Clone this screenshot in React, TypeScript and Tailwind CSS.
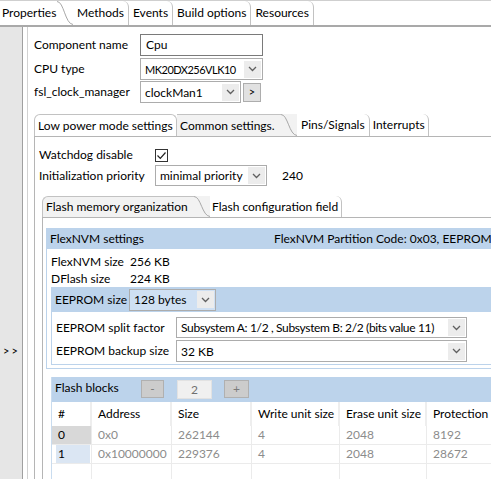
import React from 'react';

const Chevron = () => (
  <svg width="9" height="6" viewBox="0 0 9 6">
    <path d="M1 1l3.5 3.5L8 1" stroke="#606060" fill="none" strokeWidth="1.3" />
  </svg>
);

type ComboProps = {
  value: string;
  className: string;
  bg?: string;
  textCls?: string;
};

const Combo = ({ value, className, bg = 'bg-white', textCls = '' }: ComboProps) => (
  <div className={`flex items-center border border-[#acacac] ${bg} ${className}`}>
    <span className={`min-w-0 flex-1 overflow-hidden pl-[4px] leading-[17px] ${textCls}`}>{value}</span>
    <div className="mr-[1px] flex h-[17px] w-[17px] shrink-0 items-center justify-center bg-[#ececec]">
      <Chevron />
    </div>
  </div>
);

const Curve = ({ h }: { h: number }) => (
  <svg width="16" height={h} viewBox={`0 0 16 ${h}`} className="shrink-0">
    <path d={`M0 0.5 C7 0.5, 8 ${h - 1}, 16 ${h - 0.5}`} stroke="#a8a8a8" fill="none" />
  </svg>
);

const TopTabs = () => {
  const tabs = ['Methods', 'Events', 'Build options', 'Resources'];
  return (
    <div className="flex h-[27px] border-t border-[#cfcfcf] border-b-2 border-b-[#a9a9a9] bg-white">
      <div className="flex w-[57px] items-center pl-[2px]">Properties</div>
      <Curve h={24} />
      {tabs.map((t) => (
        <div
          key={t}
          className="flex items-center rounded-tr-[6px] border-r border-[#c2c2c2] px-[4px]"
        >
          {t}
        </div>
      ))}
    </div>
  );
};

const InnerTabs = () => (
  <div className="flex h-[23px] border-b border-[#b5b5b5]">
    <div className="flex w-[143px] items-center rounded-tl-[6px] rounded-tr-[6px] border-l border-r border-t border-[#c2c2c2] px-[3px]">
      Low power mode settings
    </div>
    <div className="flex w-[104px] items-center border-t border-[#c2c2c2] bg-[#f2f2f2] pl-[3px]">
      Common settings.
    </div>
    <div className="flex bg-[#f2f2f2]">
      <Curve h={22} />
    </div>
    <div className="flex items-center rounded-tr-[6px] border-r border-[#c2c2c2] px-[4px]">
      Pins/Signals
    </div>
    <div className="flex items-center rounded-tr-[6px] border-r border-[#c2c2c2] px-[3px]">
      Interrupts
    </div>
  </div>
);

const FlashTabs = () => (
  <div className="flex h-[22px] border-b border-[#b5b5b5]">
    <div className="flex w-[152px] items-center rounded-tl-[6px] border-l border-t border-[#c2c2c2] bg-[#f2f2f2] pl-[3px]">
      Flash memory organization
    </div>
    <div className="flex bg-[#f2f2f2]">
      <Curve h={21} />
    </div>
    <div className="flex items-center rounded-tr-[6px] border-r border-[#c2c2c2] pl-[2px] pr-[3px]">
      Flash configuration field
    </div>
  </div>
);

const columns = [
  { label: '#', w: 'w-[40px]' },
  { label: 'Address', w: 'w-[80px]' },
  { label: 'Size', w: 'w-[80px]' },
  { label: 'Write unit size', w: 'w-[88px]' },
  { label: 'Erase unit size', w: 'w-[87px]' },
  { label: 'Protection', w: 'w-[100px]' },
];

const rows = [
  ['0', '0x0', '262144', '4', '2048', '8192'],
  ['1', '0x10000000', '229376', '4', '2048', '28672'],
  ['', '', '', '', '', ''],
];

const FlashBlocks = () => (
  <div className="ml-[5px] mt-[8px] w-[520px] border-l border-[#c9dcef]">
    <div className="flex h-[25px] items-start bg-[#bcd3eb]">
      <span className="w-[89px] pl-[3px] pt-[3px] leading-[16px]">Flash blocks</span>
      <div className="mt-[3px] flex h-[18px] w-[23px] items-center justify-center border border-[#b0b0b0] bg-[#cccccc] text-[#7a7a7a]">
        -
      </div>
      <div className="ml-[13px] mt-[3px] flex h-[19px] w-[35px] items-center justify-center border border-[#e2e2e2] bg-[#f0f0f0] text-[#707070]">
        2
      </div>
      <div className="ml-[12px] mt-[3px] flex h-[18px] w-[25px] items-center justify-center border border-[#b0b0b0] bg-[#cccccc] text-[#7a7a7a]">
        +
      </div>
    </div>
    <div className="flex h-[24px]">
      {columns.map((c) => (
        <div key={c.label} className={`${c.w} flex items-center border-r-2 border-[#eeeeee] pl-[6px]`}>
          {c.label}
        </div>
      ))}
    </div>
    {rows.map((r, i) => (
      <div key={i} className="flex h-[19px] border-b border-[#ebebeb]">
        {r.map((v, j) => (
          <div
            key={j}
            className={`${columns[j].w} flex items-center border-r border-[#ebebeb] ${
              j === 0 ? 'text-black' : 'pl-[6px] text-[#8c8c8c]'
            }`}
          >
            {j === 0 && i === 0 && (
              <div className="flex h-full w-full items-center bg-[#d8d8d8] pl-[6px]">{v}</div>
            )}
            {j === 0 && i === 1 && (
              <div className="ml-[4px] mr-[1px] flex h-full flex-1 items-center bg-[#dbe6f3] pl-[2px]">
                {v}
              </div>
            )}
            {j > 0 && v}
          </div>
        ))}
      </div>
    ))}
  </div>
);

const FlexNvm = () => (
  <div className="w-[520px] border border-[#bcd3eb]">
    <div className="flex h-[20px] items-center bg-[#bcd3eb]">
      <span className="w-[227px] pl-[3px]">FlexNVM settings</span>
      <span>FlexNVM Partition Code: 0x03, EEPROM Data size</span>
    </div>
    <div className="pl-[4px] pt-[4px]">
      <div className="flex h-[17px] items-center">
        <span className="w-[79px]">FlexNVM size</span>
        <span>256 KB</span>
      </div>
      <div className="flex h-[17px] items-center">
        <span className="w-[79px]">DFlash size</span>
        <span>224 KB</span>
      </div>
      <div className="flex h-[25px] items-center bg-[#bcd3eb] pl-[4px]">
        <span className="w-[74px]">EEPROM size</span>
        <Combo value="128 bytes" className="h-[22px] w-[87px]" bg="bg-[#cfe0f3]" />
      </div>
      <div className="border border-t-0 border-[#bcd3eb] pb-[2px] pl-[4px] pt-[5px]">
        <div className="flex h-[21px] items-center">
          <span className="w-[120px]">EEPROM split factor</span>
          <Combo
            value="Subsystem A: 1/2 , Subsystem B: 2/2 (bits value 11)"
            className="h-[21px] w-[291px]"
            textCls="tracking-[-0.35px]"
          />
        </div>
        <div className="mt-[2px] flex h-[22px] items-center">
          <span className="w-[120px]">EEPROM backup size</span>
          <Combo value="32 KB" className="h-[22px] w-[291px]" />
        </div>
      </div>
      <div className="h-[3px]" />
    </div>
  </div>
);

export default function App() {
  return (
    <div className="h-[479px] w-[491px] overflow-hidden whitespace-nowrap bg-white font-['Lato','Segoe_UI',sans-serif] text-[12px] text-black">
      <TopTabs />
      <div className="flex h-[452px]">
        <div className="w-[23px] shrink-0 border-r border-[#a0a0a0] bg-[#e6e6e6] pl-[3px] pt-[316px] text-[11px] tracking-[2px]">
          &gt;&gt;
        </div>
        <div className="w-[5px] shrink-0 border-r border-[#d2d2d2]" />
        <div className="min-w-0 flex-1 pl-[6px] pt-[7px]">
          <div className="flex h-[22px] items-center">
            <span className="w-[106px]">Component name</span>
            <div className="flex h-[22px] w-[123px] items-center border border-[#7a7a7a] pl-[5px]">Cpu</div>
          </div>
          <div className="mt-[2px] flex h-[22px] items-center">
            <span className="w-[106px]">CPU type</span>
            <Combo
              value="MK20DX256VLK10"
              className="h-[22px] w-[123px]"
              textCls="text-[11px] tracking-[-0.5px]"
            />
          </div>
          <div className="mt-[1px] flex h-[22px] items-center">
            <span className="w-[106px]">fsl_clock_manager</span>
            <Combo value="clockMan1" className="h-[22px] w-[101px]" />
            <div className="ml-[2px] flex h-[19px] w-[18px] items-center justify-center border border-[#adadad] bg-[#e1e1e1] text-[11px]">
              &gt;
            </div>
          </div>
          <div className="mt-[11px] w-[540px]">
            <InnerTabs />
            <div className="border-l border-[#b5b5b5] pl-[4px] pt-[10px]">
              <div className="flex h-[16px] items-center">
                <span className="w-[116px]">Watchdog disable</span>
                <div className="flex h-[13px] w-[13px] items-center justify-center border border-[#333333]">
                  <svg width="11" height="11" viewBox="0 0 11 11">
                    <path d="M1.5 5.5l2.8 2.8L9.5 2.5" stroke="#222" fill="none" strokeWidth="1.2" />
                  </svg>
                </div>
              </div>
              <div className="mt-[2px] flex h-[21px] items-center">
                <span className="w-[116px]">Initialization priority</span>
                <Combo value="minimal priority" className="h-[21px] w-[112px]" />
                <span className="ml-[15px]">240</span>
              </div>
              <div className="ml-[3px] mt-[10px]">
                <FlashTabs />
                <div className="border-l border-[#b5b5b5] pl-[3px] pt-[10px]">
                  <FlexNvm />
                  <FlashBlocks />
                </div>
              </div>
            </div>
          </div>
        </div>
      </div>
    </div>
  );
}
